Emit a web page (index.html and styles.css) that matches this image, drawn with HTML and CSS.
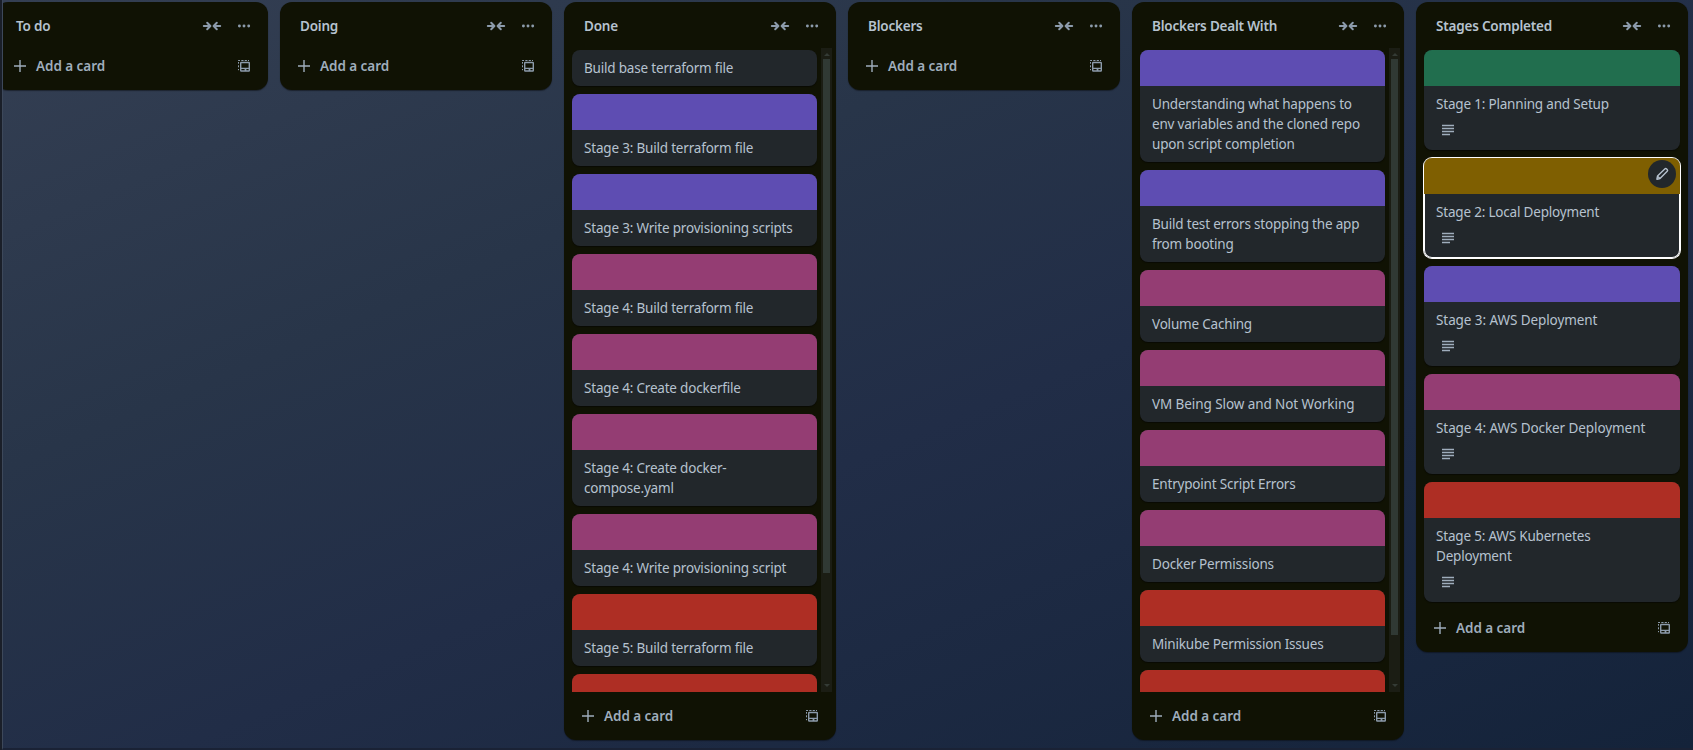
FILE: index.html
```
<!DOCTYPE html>
<html lang="en">
<head>
<meta charset="utf-8">
<title>Board</title>
<link rel="stylesheet" href="styles.css">
</head>
<body>
<svg class="defs" aria-hidden="true">
  <symbol id="collapse" viewBox="0 0 20 16"><path d="M1.8 8H8M5.2 4.8 8.4 8 5.2 11.2M18.2 8H12M14.8 4.8 11.6 8 14.8 11.2" fill="none" stroke="currentColor" stroke-width="2" stroke-linecap="round" stroke-linejoin="round"/></symbol>
  <symbol id="more" viewBox="0 0 16 16"><g fill="currentColor"><circle cx="3.4" cy="8" r="1.45"/><circle cx="8" cy="8" r="1.45"/><circle cx="12.7" cy="8" r="1.45"/></g></symbol>
  <symbol id="plus" viewBox="0 0 16 16"><path d="M8 2v12M2 8h12" fill="none" stroke="currentColor" stroke-width="1.4"/></symbol>
  <symbol id="template" viewBox="0 0 16 16"><path d="M5.2 3.8h7.6a1.2 1.2 0 0 1 1.2 1.2v7.6a1.2 1.2 0 0 1-1.2 1.2H5.2A1.2 1.2 0 0 1 4 12.6V5a1.2 1.2 0 0 1 1.2-1.2zM5.4 5.2v4.6h7.2V5.2zM5.4 11.1v1.2h3.2v-1.2zM10.4 11.1v1.2h2.2v-1.2z" fill="currentColor" fill-rule="evenodd"/><path d="M2.5 12.2V11M2.5 9.3V7.3M2.5 5.7V4M2.1 2.5H4M5.3 2.5h2.2M8.7 2.5h2.2M12 2.5h1" fill="none" stroke="currentColor"/></symbol>
  <symbol id="desc" viewBox="0 0 16 16"><path d="M2 3.6h12M2 6.6h12M2 9.6h12M2 12.6h8" fill="none" stroke="currentColor" stroke-width="1.5"/></symbol>
  <symbol id="pencil" viewBox="0 0 16 16"><path d="M10.8 2.9a1.3 1.3 0 0 1 1.8 0l.6.6a1.3 1.3 0 0 1 0 1.8L6 12.5l-3.1.7.6-3.1zM3.6 10.2 6 12.4" fill="none" stroke="currentColor" stroke-width="1.4" stroke-linejoin="round"/></symbol>
</svg>
<main class="board">
  <section class="list">
    <header class="list-head"><h2>To do</h2><span class="btn"><svg class="wide"><use href="#collapse"/></svg></span><span class="btn"><svg><use href="#more"/></svg></span></header>
    <footer class="list-foot"><span class="add"><svg><use href="#plus"/></svg>Add a card</span><span class="btn"><svg><use href="#template"/></svg></span></footer>
  </section>
  <section class="list">
    <header class="list-head"><h2>Doing</h2><span class="btn"><svg class="wide"><use href="#collapse"/></svg></span><span class="btn"><svg><use href="#more"/></svg></span></header>
    <footer class="list-foot"><span class="add"><svg><use href="#plus"/></svg>Add a card</span><span class="btn"><svg><use href="#template"/></svg></span></footer>
  </section>
  <section class="list">
    <header class="list-head"><h2>Done</h2><span class="btn"><svg class="wide"><use href="#collapse"/></svg></span><span class="btn"><svg><use href="#more"/></svg></span></header>
    <div class="scroller">
      <div class="cards">
        <article class="card"><p>Build base terraform file</p></article>
        <article class="card purple"><p>Stage 3: Build terraform file</p></article>
        <article class="card purple"><p>Stage 3: Write provisioning scripts</p></article>
        <article class="card magenta"><p>Stage 4: Build terraform file</p></article>
        <article class="card magenta"><p>Stage 4: Create dockerfile</p></article>
        <article class="card magenta"><p>Stage 4: Create docker-<br>compose.yaml</p></article>
        <article class="card magenta"><p>Stage 4: Write provisioning script</p></article>
        <article class="card red"><p>Stage 5: Build terraform file</p></article>
        <article class="card red"></article>
      </div>
      <div class="bar"><i class="up"></i><div class="thumb thumb-done"></div><i class="down"></i></div>
    </div>
    <footer class="list-foot"><span class="add"><svg><use href="#plus"/></svg>Add a card</span><span class="btn"><svg><use href="#template"/></svg></span></footer>
  </section>
  <section class="list">
    <header class="list-head"><h2>Blockers</h2><span class="btn"><svg class="wide"><use href="#collapse"/></svg></span><span class="btn"><svg><use href="#more"/></svg></span></header>
    <footer class="list-foot"><span class="add"><svg><use href="#plus"/></svg>Add a card</span><span class="btn"><svg><use href="#template"/></svg></span></footer>
  </section>
  <section class="list">
    <header class="list-head"><h2>Blockers Dealt With</h2><span class="btn"><svg class="wide"><use href="#collapse"/></svg></span><span class="btn"><svg><use href="#more"/></svg></span></header>
    <div class="scroller">
      <div class="cards">
        <article class="card purple"><p>Understanding what happens to<br>env variables and the cloned repo<br>upon script completion</p></article>
        <article class="card purple"><p>Build test errors stopping the app<br>from booting</p></article>
        <article class="card magenta"><p>Volume Caching</p></article>
        <article class="card magenta"><p class="loose">VM Being Slow and Not Working</p></article>
        <article class="card magenta"><p>Entrypoint Script Errors</p></article>
        <article class="card magenta"><p>Docker Permissions</p></article>
        <article class="card red"><p>Minikube Permission Issues</p></article>
        <article class="card red"></article>
      </div>
      <div class="bar"><i class="up"></i><div class="thumb thumb-blockers"></div><i class="down"></i></div>
    </div>
    <footer class="list-foot"><span class="add"><svg><use href="#plus"/></svg>Add a card</span><span class="btn"><svg><use href="#template"/></svg></span></footer>
  </section>
  <section class="list">
    <header class="list-head"><h2>Stages Completed</h2><span class="btn"><svg class="wide"><use href="#collapse"/></svg></span><span class="btn"><svg><use href="#more"/></svg></span></header>
    <div class="scroller full">
      <div class="cards">
        <article class="card green"><p>Stage 1: Planning and Setup</p><div class="badge"><svg><use href="#desc"/></svg></div></article>
        <article class="card yellow active"><span class="edit"><svg><use href="#pencil"/></svg></span><p>Stage 2: Local Deployment</p><div class="badge"><svg><use href="#desc"/></svg></div></article>
        <article class="card purple"><p class="loose">Stage 3: AWS Deployment</p><div class="badge"><svg><use href="#desc"/></svg></div></article>
        <article class="card magenta"><p class="loose">Stage 4: AWS Docker Deployment</p><div class="badge"><svg><use href="#desc"/></svg></div></article>
        <article class="card red"><p>Stage 5: AWS Kubernetes<br>Deployment</p><div class="badge"><svg><use href="#desc"/></svg></div></article>
      </div>
    </div>
    <footer class="list-foot"><span class="add"><svg><use href="#plus"/></svg>Add a card</span><span class="btn"><svg><use href="#template"/></svg></span></footer>
  </section>
</main>
</body>
</html>
```
FILE: styles.css
```
* { box-sizing: border-box; }
body {
  margin: 0;
  height: 750px;
  overflow: hidden;
  background: #1a1f29;
  font: 13.5px/20px "Noto Sans", "Open Sans", sans-serif;
  color: #b6c2cf;
}
.defs { display: none; }
svg { width: 16px; height: 16px; display: block; flex: none; }
svg.wide { width: 20px; }
h2, p { margin: 0; font-size: inherit; white-space: nowrap; }
.board {
  height: 750px;
  margin-left: 2px;
  padding-top: 2px;
  border-left: 1px solid #3d485a;
  border-bottom: 2px solid #1a2235;
  background: linear-gradient(157deg, #343f53 0%, #283549 32%, #212d47 56%, #14233a 100%);
  display: flex;
  align-items: flex-start;
  gap: 12px;
  overflow: hidden;
}
.list {
  width: 272px;
  flex: none;
  padding-bottom: 8px;
  border-radius: 12px;
  background: #101204;
  box-shadow: 0 1px 1px rgba(9, 12, 16, .5);
}
.list:first-child { margin-left: -7px; }
.list-head, .list-foot { display: flex; padding: 8px 8px 0; }
.list-head h2 { flex: 1; padding: 6px 0 6px 12px; font-weight: 600; letter-spacing: -.2px; }
.btn {
  width: 32px;
  height: 32px;
  display: flex;
  align-items: center;
  justify-content: center;
  color: #8c9bab;
}
.add {
  flex: 1;
  height: 32px;
  padding-left: 8px;
  display: flex;
  align-items: center;
  gap: 8px;
  font-weight: 600;
  letter-spacing: -.05px;
  color: #9fadbc;
}
.scroller {
  margin-top: 6px;
  height: 644px;
  padding: 0 4px 0 8px;
  display: flex;
  gap: 4px;
  overflow: hidden;
}
.scroller.full { height: auto; padding-right: 8px; overflow: visible; }
.cards { flex: 1; padding: 2px 0; display: flex; flex-direction: column; gap: 8px; }
.card {
  flex: none;
  position: relative;
  border-radius: 8px;
  background: #22272b;
  box-shadow: 0 1px 1px rgba(3, 4, 4, .5);
}
.card::before { display: block; border-radius: 8px 8px 0 0; }
.card p { padding: 8px 12px; letter-spacing: -.19px; }
.card .loose { letter-spacing: -.08px; }
.purple::before, .magenta::before, .red::before, .green::before, .yellow::before { content: ""; height: 36px; }
.purple::before { background: #5e4db2; }
.magenta::before { background: #943d73; }
.red::before { background: #ae2e24; }
.green::before { background: #216e4e; }
.yellow::before { background: #7f5f01; }
.badge { height: 32px; margin-top: -4px; padding: 4px 16px; color: #9fadbc; }
.active { box-shadow: 0 0 0 1px #fff, inset 0 0 0 1px #fff; }
.edit {
  position: absolute;
  top: 2px;
  right: 4px;
  width: 28px;
  height: 28px;
  border-radius: 50%;
  background: #22272b;
  display: flex;
  align-items: center;
  justify-content: center;
}
.bar {
  width: 11px;
  background: #1b1d14;
  display: flex;
  flex-direction: column;
  align-items: center;
}
.bar i { border: 3px solid transparent; }
.bar .up { margin: 2px 0 3px; border-bottom-color: #343b35; }
.bar .down { margin: auto 0 2px; border-top-color: #343b35; }
.thumb { width: 7px; background: #303934; }
.thumb-done { height: 514px; }
.thumb-blockers { height: 576px; }
```
